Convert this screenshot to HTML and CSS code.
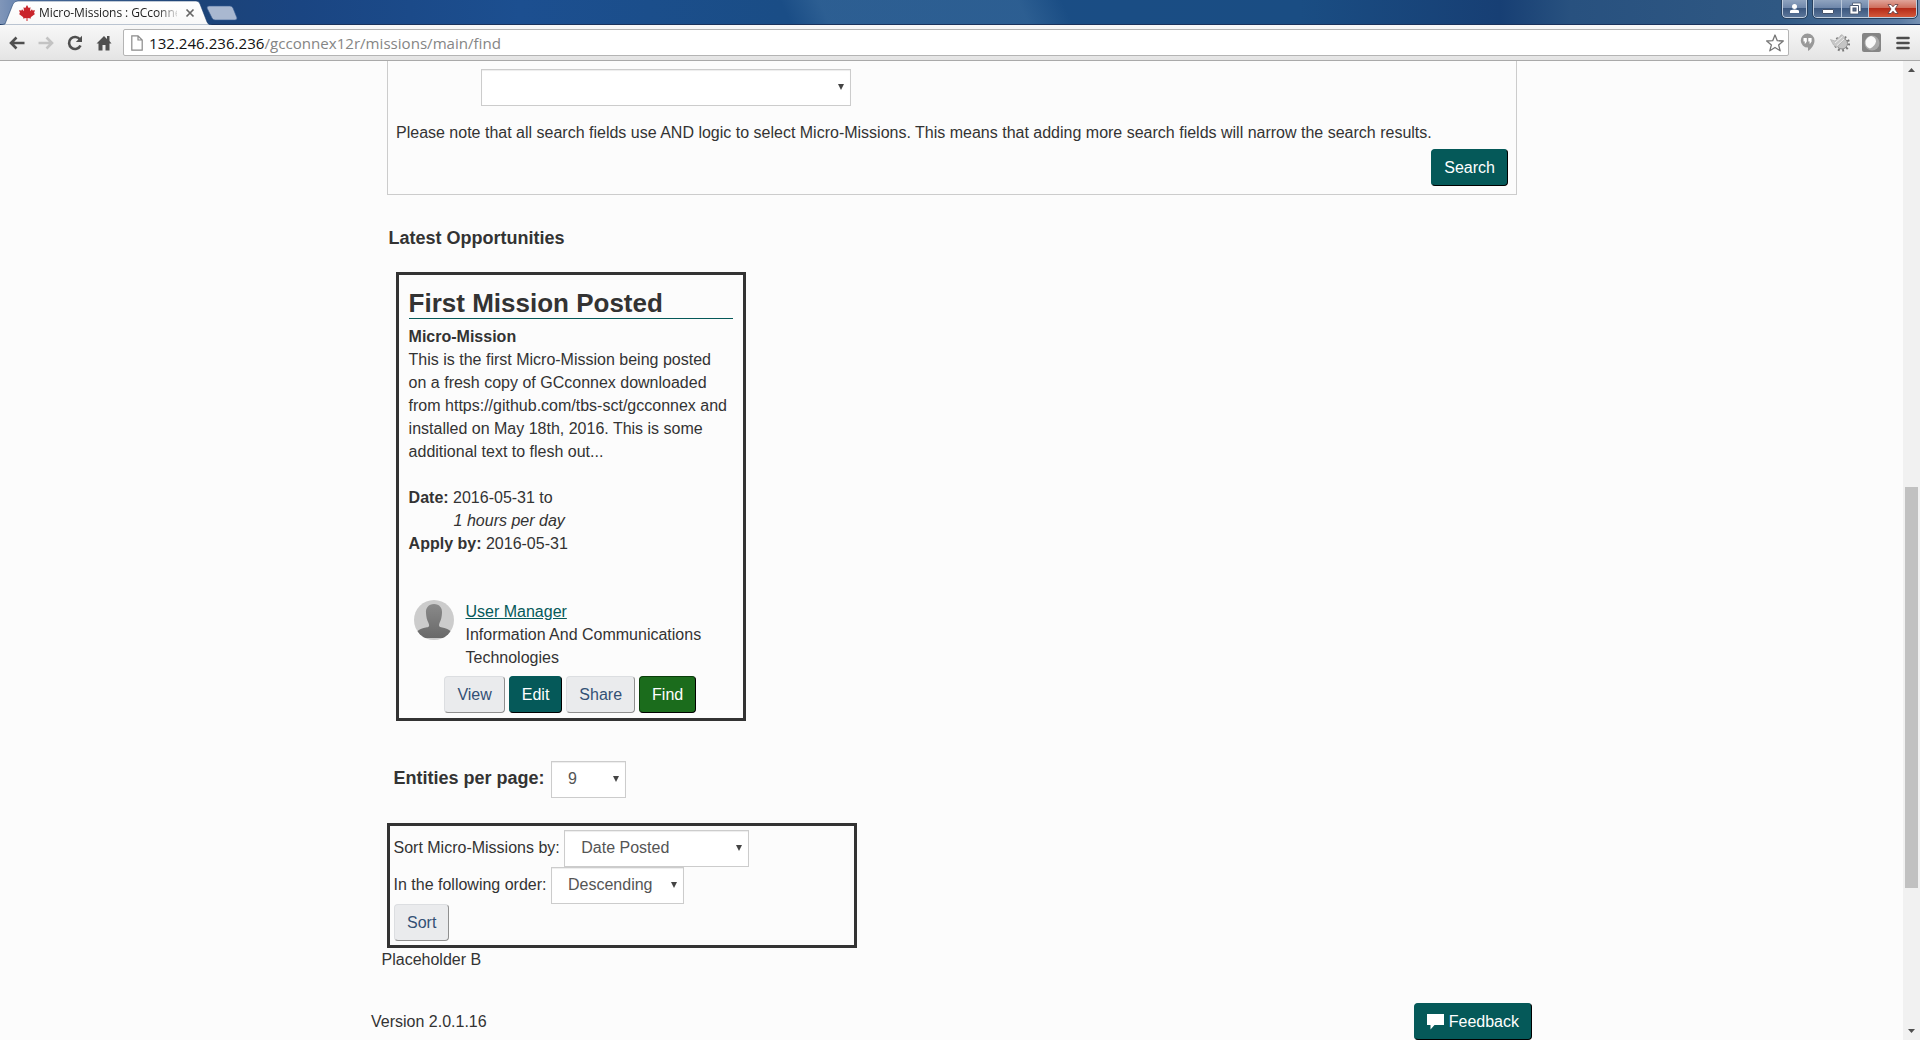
FILE: index.html
```html
<!DOCTYPE html>
<html lang="en">
<head>
<meta charset="utf-8">
<title>Micro-Missions : GCconnex</title>
<link rel="stylesheet" href="styles.css">
</head>
<body>
<header class="titlebar">
  <svg class="tab-shape" width="240" height="25" viewBox="0 0 240 25">
    <defs><linearGradient id="tabfill" x1="0" y1="0" x2="0" y2="1"><stop offset="0" stop-color="#fff"/><stop offset="1" stop-color="#f8f8f8"/></linearGradient></defs>
    <path d="M0 25 L5 24 L13 4 Q14.500 1 18 1 H196 Q199 1 200 4 L207 22 Q208 25 212 25 Z" fill="url(#tabfill)" stroke="#183c6c" stroke-opacity=".55"/>
    <path d="M209 6 H230 Q232 6 233 8 L237 18 Q237 20 235 20 H215 Q213 20 212 18 L207 8 Q207 6 209 6 Z" fill="#a9b8d0" stroke="#355b91" stroke-width=".6"/>
  </svg>
  <div class="tab">
    <svg width="16" height="16" viewBox="0 0 16 16"><path d="M8 0 L9.700 3 L11.500 2.200 L11 6.200 L13 4.300 L13.500 5.500 L16 5.300 L15 8 L16 9 L11.700 12.200 L12 13.500 L8.500 13 V16 H7.500 V13 L4 13.500 L4.300 12.200 L0 9 L1 8 L0 5.300 L2.500 5.500 L3 4.300 L5 6.200 L4.500 2.200 L6.300 3 Z" fill="#c9242b"/></svg>
    <span class="tab-title">Micro-Missions : GCconne</span>
    <svg width="10" height="10" viewBox="0 0 10 10"><path d="M1.500 1.500 L8.500 8.500 M8.500 1.500 L1.500 8.500" stroke="#666" stroke-width="1.700"/></svg>
  </div>
  <div class="win-controls">
    <span class="win win-user"><svg width="11" height="11" viewBox="0 0 11 11"><circle cx="5.500" cy="3.500" r="2.500" fill="#fff"/><path d="M1 10 V8 Q1.500 6.500 5.500 6.500 T10 8 V10 Z" fill="#fff"/></svg></span>
    <span class="win-group">
      <span class="win win-min"><svg width="12" height="12" viewBox="0 0 12 12"><rect x=".5" y="6.500" width="11" height="4" rx=".5" fill="#fff" stroke="#45536b"/></svg></span>
      <span class="win win-max"><svg width="13" height="13" viewBox="0 0 13 13"><path d="M3.500 1 H12 V9.500 H9.500 V12 H1 V3.500 H3.500 Z" fill="#fff" stroke="#45536b" stroke-width=".8"/><path d="M9.500 9.500 V3.500 H3.500" fill="none" stroke="#45536b"/><rect x="4" y="6" width="3" height="3" fill="#5e7190" stroke="#45536b"/></svg></span>
      <span class="win win-close"><svg width="12" height="12" viewBox="0 0 12 12"><path d="M1 1.500 H4 L6 3.800 L8 1.500 H11 L8 6 L11 10.500 H8 L6 8.200 L4 10.500 H1 L4 6 Z" fill="#fff" stroke="#5b3a40" stroke-width=".8"/></svg></span>
    </span>
  </div>
</header>
<nav class="toolbar">
  <svg class="nav-icon" width="16" height="16" viewBox="0 0 16 16"><path d="M15.500 8 H2.500 M7.500 2.500 L2 8 L7.500 13.500" fill="none" stroke="#4f4f4f" stroke-width="2.600"/></svg>
  <svg class="nav-icon" width="16" height="16" viewBox="0 0 16 16"><path d="M.5 8 H13.500 M8.500 2.500 L14 8 L8.500 13.500" fill="none" stroke="#c3c3c3" stroke-width="2.600"/></svg>
  <svg class="nav-icon" width="16" height="16" viewBox="0 0 16 16"><path d="M13 4.500 A6 6 0 1 0 13.500 10.500" fill="none" stroke="#4f4f4f" stroke-width="2.600"/><path d="M15 .8 V7 H8.800 Z" fill="#4f4f4f"/></svg>
  <svg class="nav-icon" width="16" height="16" viewBox="0 0 16 16"><path d="M11 1 H13.500 V6 L15.500 8.500 H13.500 V15.500 H9.500 V10 H6.500 V15.500 H2.500 V8.500 H.5 L8 1 L11 4 Z" fill="#4f4f4f"/></svg>
  <div class="omnibox">
    <svg width="12" height="16" viewBox="0 0 12 16"><path d="M.8 .8 H7 L11.200 5 V15.200 H.8 Z M7 .8 V5 H11.200" fill="#fff" stroke="#8a8a8a" stroke-width="1.200"/></svg>
    <span class="url"><b>132.246.236.236</b>/gcconnex12r/missions/main/find</span>
    <svg width="18" height="18" viewBox="0 0 18 18"><path d="M9 1 L11.300 6.700 L17.300 7 L12.600 10.900 L14.200 16.800 L9 13.500 L3.800 16.800 L5.400 10.900 L.7 7 L6.700 6.700 Z" fill="#fff" stroke="#757575" stroke-width="1.300" stroke-linejoin="round"/></svg>
  </div>
  <div class="extensions">
    <svg width="15" height="19" viewBox="0 0 15 19"><path d="M7.500 .5 A7 7 0 0 1 14.500 7.500 C14.500 12 11 16 8 18 V14.500 A7 7 0 1 1 7.500 .5 Z" fill="#999"/><path d="M3.500 5 H6.800 V8.500 L5.500 10.500 H4.500 L5 8.500 H3.500 Z M8.300 5 H11.600 V8.500 L10.300 10.500 H9.300 L9.800 8.500 H8.300 Z" fill="#fff"/></svg>
    <svg width="20" height="20" viewBox="0 0 20 20"><circle cx="12" cy="10.500" r="6.800" fill="none" stroke="#777" stroke-width="2.600" stroke-dasharray="1.800 2.500"/><circle cx="12" cy="10.500" r="5.500" fill="#c4c4c4" stroke="#8c8c8c"/><path d="M.5 6.500 L5 8 L12 1.500 L15 5 L7 14.500 L3.500 12 Z" fill="#c8c8c8" stroke="#aaa" stroke-width=".6"/><path d="M5 10 L12.500 3.500 M7 12.500 L14 6" stroke="#eee"/></svg>
    <svg width="19" height="19" viewBox="0 0 19 19"><rect width="19" height="19" rx="2" fill="#858585"/><circle cx="10" cy="10" r="7.500" fill="#aaa"/><path d="M9 3 Q14 4 14 8.500 Q13 13 8 15.500 Q3 14 3.500 8 Q5 4 9 3 Z" fill="#f9f9f9"/></svg>
    <svg width="14" height="14" viewBox="0 0 14 14"><path d="M1.500 2 H12.500 M1.500 7 H12.500 M1.500 12 H12.500" stroke="#4d4d4d" stroke-width="2.600" stroke-linecap="round"/></svg>
  </div>
</nav>
<div class="viewport">
  <main class="page">
    <section class="search-panel">
      <div class="select select-search"><span></span><i class="arrow"></i></div>
      <p class="note">Please note that all search fields use AND logic to select Micro-Missions. This means that adding more search fields will narrow the search results.</p>
      <button class="btn btn-primary btn-search">Search</button>
    </section>
    <h4 class="latest">Latest Opportunities</h4>
    <article class="card">
      <h2 class="card-title">First Mission Posted</h2>
      <div class="card-text"><b>Micro-Mission</b></div>
      <div class="card-text">This is the first Micro-Mission being posted<br>on a fresh copy of GCconnex downloaded<br>from https://github.com/tbs-sct/gcconnex and<br>installed on May 18th, 2016. This is some<br>additional text to flesh out...</div>
      <div class="dates">
        <div><b>Date:</b> 2016-05-31 to</div>
        <div class="hours">1 hours per day</div>
        <div><b>Apply by:</b> 2016-05-31</div>
      </div>
      <div class="owner">
        <svg width="40" height="40" viewBox="0 0 40 40">
          <defs><clipPath id="round"><circle cx="20" cy="20" r="20"/></clipPath><linearGradient id="person" x1="0" y1="0" x2="0" y2="1"><stop offset="0" stop-color="#8a8a8a"/><stop offset="1" stop-color="#696969"/></linearGradient></defs>
          <g clip-path="url(#round)"><rect width="40" height="40" fill="#ccc"/><path d="M20 4 C25.500 4 28.500 8 28 13 C27.800 17 27 20 25.500 23 C24.500 25.500 25 27 27 27.300 C32 28 35.500 29.500 37 32 V38 H3 V32 C4.500 29.500 8 28 13 27.300 C15.500 27 15.500 25.500 14.500 23 C13 20 12.200 17 12 13 C11.500 8 14.500 4 20 4 Z" fill="url(#person)"/></g>
        </svg>
        <div><a class="link" href="#">User Manager</a><br>Information And Communications<br>Technologies</div>
      </div>
      <div class="actions">
        <button class="btn btn-default">View</button>
        <button class="btn btn-primary">Edit</button>
        <button class="btn btn-default">Share</button>
        <button class="btn btn-success">Find</button>
      </div>
    </article>
    <div class="per-page"><b>Entities per page:</b><div class="select select-count"><span>9</span><i class="arrow"></i></div></div>
    <section class="sort-box">
      <div class="row"><span>Sort Micro-Missions by:</span><div class="select select-field"><span>Date Posted</span><i class="arrow"></i></div></div>
      <div class="row"><span>In the following order:</span><div class="select select-order"><span>Descending</span><i class="arrow"></i></div></div>
      <button class="btn btn-default">Sort</button>
    </section>
    <div class="placeholder">Placeholder B</div>
    <footer class="footer">
      <span class="version">Version 2.0.1.16</span>
      <button class="btn btn-primary btn-feedback"><svg width="17" height="16" viewBox="0 0 17 16"><path d="M0 0 H17 V11 H7.500 L3.500 15.500 V11 H0 Z" fill="#fff"/></svg>Feedback</button>
    </footer>
  </main>
  <aside class="scrollbar">
    <svg width="7" height="4" viewBox="0 0 7 4"><path d="M3.500 0 L7 4 H0 Z" fill="#505050"/></svg>
    <div class="thumb"></div>
    <svg class="down" width="7" height="4" viewBox="0 0 7 4"><path d="M0 0 H7 L3.500 4 Z" fill="#505050"/></svg>
  </aside>
</div>
</body>
</html>
```

FILE: styles.css
```css
* { box-sizing: border-box; }
body {
  margin: 0;
  height: 1040px;
  overflow: hidden;
  display: flex;
  flex-direction: column;
  background: #fcfcfc;
  color: #333;
  font: 16px/23px "Liberation Sans", Arial, sans-serif;
}
svg { display: block; flex: none; }

.titlebar {
  position: relative;
  flex: none;
  height: 25px;
  display: flex;
  justify-content: space-between;
  background:
    linear-gradient(#1b335c, #1b335c) 0 100% / 100% 1px no-repeat,
    linear-gradient(65deg, transparent 790px, rgba(72, 120, 165, .4) 825px, rgba(72, 120, 165, .4) 1005px, transparent 1045px) -80px 0 / 2000px 100% no-repeat,
    linear-gradient(90deg, #8096b9 0, #5a7aa9 30px, #1c4378 200px, #1a4582 300px, #1c4f90 520px, #1a4d86 780px, #1a4d83 1300px, #173f74 1500px, #28517f 1570px, #2f5883 1780px, #5b7ba2 1900px, #7590b2 100%);
}
.tab-shape { position: absolute; left: 0; top: 0; }
.tab {
  position: relative;
  display: flex;
  align-items: center;
  padding: 1px 0 0 19px;
  font: 12px/16px "Open Sans", sans-serif;
  color: #222;
}
.tab-title {
  width: 138px;
  margin: 0 8px 0 4px;
  white-space: nowrap;
  letter-spacing: -.08px;
  -webkit-mask-image: linear-gradient(90deg, #000 118px, transparent 142px);
}
.win-controls { display: flex; align-items: flex-start; gap: 6px; padding-right: 3px; }
.win {
  height: 17px;
  display: flex;
  align-items: center;
  justify-content: center;
  background: linear-gradient(#8fa3bf 0, #7088ab 45%, #3c587f 50%, #5a7599);
}
.win-user { width: 25px; height: 18px; border: 1px solid #c0cede; border-top: 0; border-radius: 0 0 4px 4px; outline: 1px solid #28415f; }
.win-group { display: flex; border: 1px solid #c0cede; border-top: 0; border-radius: 0 0 4px 4px; outline: 1px solid #28415f; overflow: hidden; }
.win-min { width: 28px; border-right: 1px solid #bac8da; }
.win-max { width: 27px; border-right: 1px solid #bac8da; }
.win-close { width: 47px; background: linear-gradient(#e0a499 0, #cf6f5d 45%, #b52b18 50%, #d3583a); }

.toolbar {
  flex: none;
  height: 36px;
  display: flex;
  align-items: center;
  padding: 0 10px 0 9px;
  background: linear-gradient(#f8f8f8, #e4e4e4);
  border-bottom: 1px solid #a9a9a9;
}
.nav-icon { margin-right: 13px; }
.omnibox {
  flex: 1;
  height: 27px;
  display: flex;
  align-items: center;
  margin: 0 11px 0 -2px;
  padding: 0 4px 0 7px;
  border: 1px solid #b4b4b4;
  border-radius: 2px;
  background: #fff;
}
.url { flex: 1; margin-left: 6px; font: 15.100px/22px "Open Sans", sans-serif; color: #858585; }
.url b { font-weight: 400; color: #111; }
.extensions { display: grid; grid-template-columns: 30px 32px 34px 14px; align-items: center; }

.viewport { flex: 1; min-height: 0; display: flex; justify-content: space-between; }
.page { width: 1161px; margin-left: 371px; display: flex; flex-direction: column; align-items: flex-start; }
.search-panel {
  width: 1130px;
  height: 134px;
  margin-left: 16px;
  padding: 8px 8px 0 7px;
  border: 1px solid #ccc;
  border-top: 0;
  display: flex;
  flex-direction: column;
}
.select {
  height: 37px;
  display: flex;
  align-items: center;
  justify-content: space-between;
  padding: 0 6px 2px 16px;
  border: 1px solid #ccc;
  background: #fff;
  box-shadow: inset 0 1px 1px rgba(0, 0, 0, .075);
  color: #555;
}
.arrow { border: solid transparent; border-width: 6px 3px 0; border-top-color: #444; }
.select-search { width: 370px; margin-left: 86px; }
.note { margin: 15px 0 5px; padding-left: 1px; white-space: nowrap; }
.btn {
  height: 37px;
  padding: 0 12px;
  border: 1px solid;
  border-radius: 4px;
  font: 16px/23px "Liberation Sans", Arial, sans-serif;
}
.btn-default { background: #eaebed; color: #335075; border-color: #dcdee1 #8f8f8f #8f8f8f #dcdee1; }
.btn-primary { background: #055959; color: #fff; border-color: #055959 #000 #000 #055959; }
.btn-success { background: #1b6c1c; color: #fff; border-color: #093d0a #000 #000 #093d0a; }
.btn-search { align-self: flex-end; }
.latest { margin: 32px 0 0 17.500px; font-size: 18px; line-height: 23px; }

.card {
  width: 350px;
  height: 450px;
  margin: 22px 0 0 25px;
  padding: 14px 10px 0 9.600px;
  border: 3px solid #333;
}
.card-title { margin: 0 0 6px; height: 30px; border-bottom: 1px solid #055959; font-size: 26px; line-height: 29px; }
.card-text { white-space: nowrap; }
.dates { margin-top: 23px; }
.hours { padding-left: 45px; font-style: italic; }
.owner { display: flex; gap: 11.500px; margin: 45px 0 0 5.400px; }
.link { color: #055959; text-decoration: underline; }
.actions { display: flex; justify-content: center; gap: 4px; margin: 7px 0 0 -1px; }

.per-page { display: flex; align-items: center; gap: 6.500px; margin: 40px 0 0 22.500px; font-size: 18px; }
.per-page b { margin-top: -2px; }
.per-page .select { font-size: 16px; }
.select-count { width: 75px; }
.sort-box { width: 470px; height: 125px; margin: 25px 0 0 16px; padding: 4px; border: 3px solid #333; }
.row { display: flex; gap: 4.500px; margin-left: -.5px; line-height: 36px; }
.select-field { width: 185px; }
.select-order { width: 133px; }
.placeholder { margin-left: 10.500px; }
.footer { width: 100%; display: flex; justify-content: space-between; align-items: flex-start; margin-top: 32px; }
.version { margin-top: 7px; }
.btn-feedback { display: flex; align-items: center; gap: 5px; }
.btn-feedback svg { margin-top: 1px; }

.scrollbar { width: 17px; display: flex; flex-direction: column; align-items: center; background: #f1f1f1; padding: 7px 0 7px; }
.thumb { width: 13px; height: 401px; margin-top: 415px; background: #c1c1c1; }
.down { margin-top: auto; }
```
